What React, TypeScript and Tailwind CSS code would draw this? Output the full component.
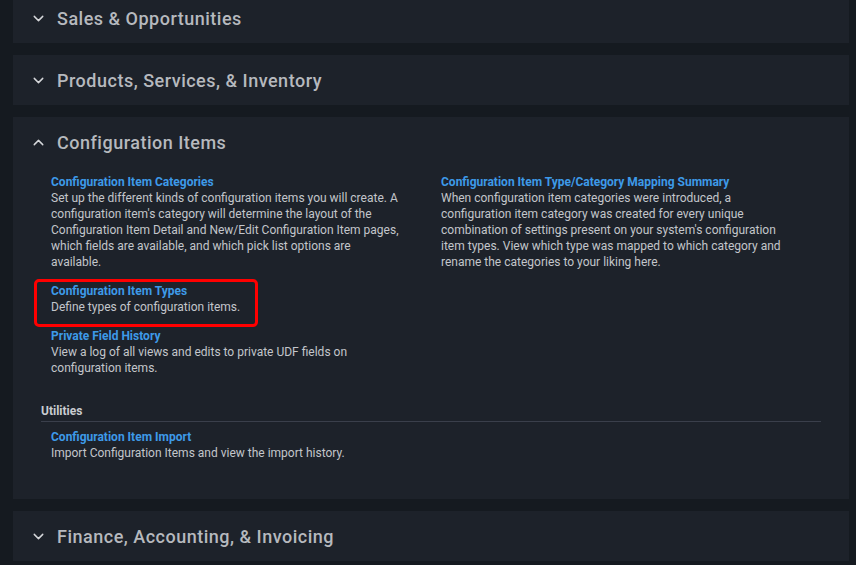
import React from "react";
import { ChevronDown, ChevronUp } from "lucide-react";

interface SetupItem {
  title: string;
  desc: string;
  highlight?: boolean;
}

const leftItems: SetupItem[] = [
  {
    title: "Configuration Item Categories",
    desc: "Set up the different kinds of configuration items you will create. A configuration item's category will determine the layout of the Configuration Item Detail and New/Edit Configuration Item pages, which fields are available, and which pick list options are available.",
  },
  {
    title: "Configuration Item Types",
    desc: "Define types of configuration items.",
    highlight: true,
  },
  {
    title: "Private Field History",
    desc: "View a log of all views and edits to private UDF fields on configuration items.",
  },
];

const rightItems: SetupItem[] = [
  {
    title: "Configuration Item Type/Category Mapping Summary",
    desc: "When configuration item categories were introduced, a configuration item category was created for every unique combination of settings present on your system's configuration item types. View which type was mapped to which category and rename the categories to your liking here.",
  },
];

const Item = ({ item }: { item: SetupItem }) => (
  <div className="relative pl-[10px] mb-[14px] w-[360px]">
    {item.highlight && (
      <div className="absolute -left-[7px] -top-[5px] w-[224px] h-[48px] border-[3px] border-[#f00] rounded-[5px]" />
    )}
    <a className="block text-[12px] leading-[15px] font-bold text-[#3d9ae8] cursor-pointer">
      {item.title}
    </a>
    <p className="text-[12px] leading-4 text-[#c3c6cb]">{item.desc}</p>
  </div>
);

const Section = ({ title, open = false, children }: { title: string; open?: boolean; children?: React.ReactNode }) => (
  <div className="bg-[#1d222a] mb-[12px]">
    <div className="h-[50px] flex items-center pl-[17px]">
      {open ? (
        <ChevronUp size={17} strokeWidth={2} className="text-[#d5d7da]" />
      ) : (
        <ChevronDown size={17} strokeWidth={2} className="text-[#d5d7da]" />
      )}
      <span className="ml-[10px] text-[18px] font-medium text-[#b6b9be] tracking-[0.5px]">{title}</span>
    </div>
    {children}
  </div>
);

export default function App() {
  return (
    <div
      className="min-h-screen h-[565px] overflow-hidden bg-[#151a20] pl-[13px] pr-[7px]"
      style={{ fontFamily: "Roboto, 'Liberation Sans', sans-serif" }}
    >
      <div className="-mt-[7px]">
        <Section title="Sales & Opportunities" />
        <Section title="Products, Services, & Inventory" />
        <Section title="Configuration Items" open>
          <div className="px-[28px] pt-[8px] pb-[24px]">
            <div className="grid grid-cols-2">
              <div>
                {leftItems.map((it) => (
                  <Item key={it.title} item={it} />
                ))}
              </div>
              <div>
                {rightItems.map((it) => (
                  <Item key={it.title} item={it} />
                ))}
              </div>
            </div>
            <div className="mt-[12px] text-[12px] font-bold text-[#c9ccd0] pb-[1px] border-b border-[#3a3f4b]">
              Utilities
            </div>
            <div className="mt-[8px]">
              <Item
                item={{
                  title: "Configuration Item Import",
                  desc: "Import Configuration Items and view the import history.",
                }}
              />
            </div>
          </div>
        </Section>
        <Section title="Finance, Accounting, & Invoicing" />
      </div>
    </div>
  );
}
